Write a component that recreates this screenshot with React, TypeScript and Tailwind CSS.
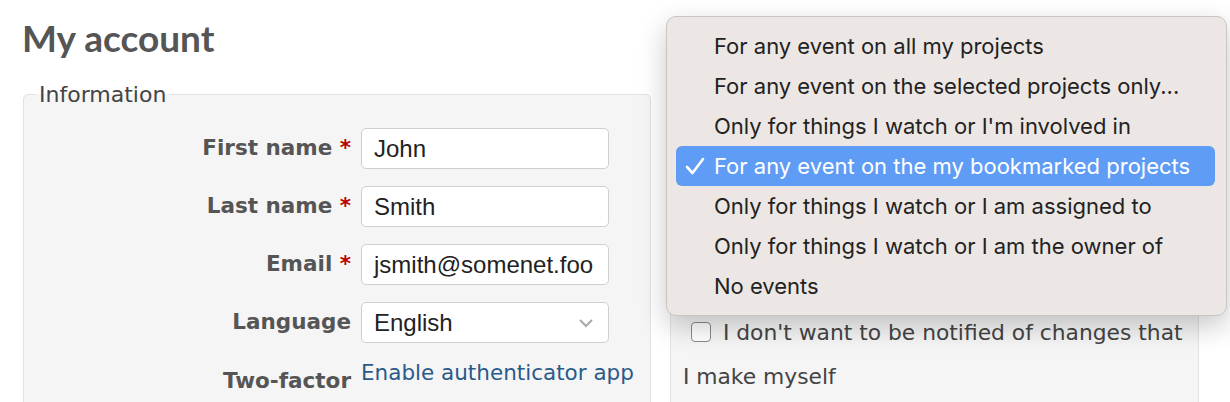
import React from "react";

const verdana = { fontFamily: '"DejaVu Sans", Verdana, sans-serif' };
const arial = { fontFamily: '"Liberation Sans", Arial, sans-serif' };
const sys = { fontFamily: 'Inter, "Noto Sans", sans-serif' };

function Row({ label, required, children }: { label: string; required?: boolean; children: React.ReactNode }) {
  return (
    <div className="flex items-center gap-[10px]">
      <div className="w-[328px] text-right font-bold text-[21.5px] text-[#555] whitespace-nowrap" style={verdana}>
        {label}
        {required && <span className="text-[#bb0000]"> *</span>}
      </div>
      {children}
    </div>
  );
}

function Input({ value }: { value: string }) {
  return (
    <div
      className="w-[248px] h-[41px] rounded-[5px] border border-[#cfcfcf] bg-white px-[12px] flex items-center text-[24px] text-[#222]"
      style={arial}
    >
      {value}
    </div>
  );
}

const items = [
  "For any event on all my projects",
  "For any event on the selected projects only...",
  "Only for things I watch or I'm involved in",
  "For any event on the my bookmarked projects",
  "Only for things I watch or I am assigned to",
  "Only for things I watch or I am the owner of",
  "No events",
];

export default function App() {
  return (
    <div className="relative w-[1230px] h-[402px] overflow-hidden bg-white">
      <div className="pl-[23px] pr-[31px]">
        <h2 className="pt-[18px] text-[37px] leading-[40px] font-bold text-[#555] -ml-[1px]" style={{ fontFamily: '"Trebuchet MS", Lato, sans-serif' }}>
          My account
        </h2>
        <div className="flex gap-[19px] mt-[20px] items-start">
          <fieldset className="w-[629px] h-[400px] border border-[#e2e2e2] rounded-[5px] bg-[#f5f5f5] pl-[12px]" style={verdana}>
            <legend className="px-[3px] text-[22px] text-[#444]">Information</legend>
            <div className="-ml-[13px] mt-[17px] flex flex-col gap-[17px]">
              <Row label="First name" required>
                <Input value="John" />
              </Row>
              <Row label="Last name" required>
                <Input value="Smith" />
              </Row>
              <Row label="Email" required>
                <Input value="jsmith@somenet.foo" />
              </Row>
              <Row label="Language">
                <div
                  className="w-[248px] h-[41px] rounded-[5px] border border-[#cfcfcf] bg-white pl-[12px] pr-[14px] flex items-center justify-between text-[24px] text-[#222]"
                  style={arial}
                >
                  <span>English</span>
                  <svg width="16" height="10" viewBox="0 0 16 10">
                    <path d="M2 2 L8 8 L14 2" fill="none" stroke="#a9a9a9" strokeWidth="2" />
                  </svg>
                </div>
              </Row>
              <div className="flex items-start gap-[10px] -mt-[3px]">
                <div className="w-[328px] text-right font-bold text-[21.5px] text-[#555] pt-[8px]" style={verdana}>
                  Two-factor
                </div>
                <a className="text-[21.5px] text-[#2a5a8a]" style={verdana}>
                  Enable authenticator app
                </a>
              </div>
            </div>
          </fieldset>
          <fieldset className="w-[530px] h-[400px] mt-[12px] border border-[#e2e2e2] rounded-[5px] bg-[#f5f5f5] pl-[12px]" style={verdana}>
            <div className="mt-[220px] text-[21.8px] leading-[44px] text-[#444]">
              <span className="inline-flex items-center align-middle mr-[12px] ml-[8px] -mt-[4px]">
                <span className="w-[20px] h-[20px] rounded-[4px] border border-[#8a8a8a] bg-white inline-block" />
              </span>
              I don't want to be notified of changes that
              <br />I make myself
            </div>
          </fieldset>
        </div>
      </div>

      <div
        className="absolute left-[666px] top-[16px] w-[561px] h-[300px] rounded-[10px] border border-[#c9c5c3] bg-[#ece7e4] shadow-[0_10px_28px_rgba(0,0,0,0.22)] px-[9px] py-[9px]"
        style={sys}
      >
        {items.map((t, i) => {
          const sel = i === 3;
          return (
            <div
              key={t}
              className={
                "h-[40px] flex items-center rounded-[6px] text-[22px] " +
                (sel ? "bg-[#5f9cf5] text-white w-[539px]" : "text-[#222]")
              }
            >
              <span className="w-[38px] flex justify-center">
                {sel && (
                  <svg width="22" height="20" viewBox="0 0 22 20">
                    <path d="M3 11 L8.5 17 L19 3" fill="none" stroke="white" strokeWidth="2.6" strokeLinecap="round" strokeLinejoin="round" />
                  </svg>
                )}
              </span>
              <span className="whitespace-nowrap">{t}</span>
            </div>
          );
        })}
      </div>
    </div>
  );
}
